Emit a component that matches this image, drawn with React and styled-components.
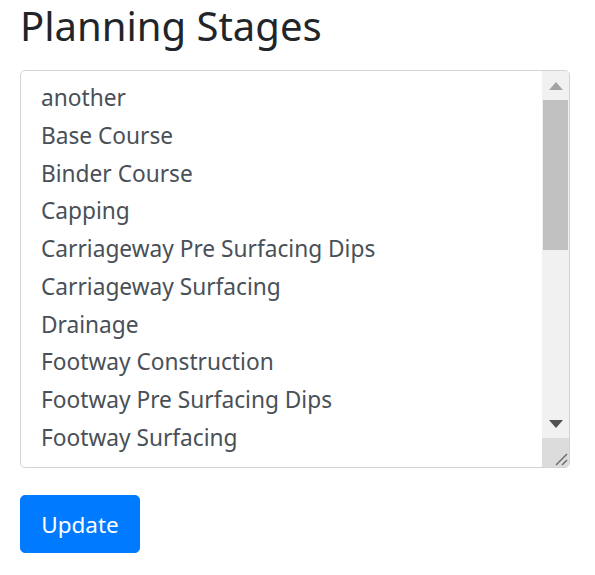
import React from 'react';
import styled, { createGlobalStyle } from 'styled-components';

const stages = [
  'another',
  'Base Course',
  'Binder Course',
  'Capping',
  'Carriageway Pre Surfacing Dips',
  'Carriageway Surfacing',
  'Drainage',
  'Footway Construction',
  'Footway Pre Surfacing Dips',
  'Footway Surfacing',
];

const GlobalStyle = createGlobalStyle`
  body {
    margin: 0;
    background: #fff;
    font-family: 'Noto Sans', 'Open Sans', sans-serif;
  }
`;

const Page = styled.div`
  padding: 0 20px;
`;

const Title = styled.h1`
  margin: 0 0 18px;
  font-size: 40px;
  font-weight: 400;
  line-height: 52px;
  color: #212529;
`;

const ListBox = styled.div`
  display: flex;
  width: 550px;
  height: 398px;
  box-sizing: border-box;
  border: 1px solid #ced4da;
  border-radius: 5px;
  overflow: hidden;
  background: #fff;
`;

const Options = styled.div`
  flex: 1;
  overflow: hidden;
  padding: 8px 0 0 20px;
`;

const Option = styled.div`
  height: 37.75px;
  line-height: 37.75px;
  font-size: 22.7px;
  color: #495057;
  white-space: nowrap;
`;

const ScrollBar = styled.div`
  width: 27px;
  display: flex;
  flex-direction: column;
  background: #f1f1f1;
`;

const ArrowButton = styled.div`
  height: 29px;
  display: flex;
  align-items: center;
  justify-content: center;
`;

const Track = styled.div`
  flex: 1;
  padding: 0 1px;
`;

const Thumb = styled.div`
  height: 150px;
  background: #c1c1c1;
`;

const Corner = styled.div`
  height: 29px;
  background: #dcdcdc;
  display: flex;
  align-items: flex-end;
  justify-content: flex-end;
`;

const Button = styled.button`
  margin-top: 27px;
  width: 120px;
  height: 58px;
  border: 1px solid #007bff;
  border-radius: 5px;
  background: #007bff;
  color: #fff;
  font-family: inherit;
  font-size: 22.5px;
  cursor: pointer;
`;

const Arrow = ({ up, color }) => (
  <svg width="14" height="8" viewBox="0 0 14 8">
    <polygon points={up ? '0,8 7,0 14,8' : '0,0 14,0 7,8'} fill={color} />
  </svg>
);

export default function App() {
  return (
    <>
      <GlobalStyle />
      <Page>
        <Title>Planning Stages</Title>
        <ListBox role="listbox" aria-multiselectable="true">
          <Options>
            {stages.map((s) => (
              <Option key={s} role="option">{s}</Option>
            ))}
          </Options>
          <ScrollBar>
            <ArrowButton>
              <Arrow up color="#a3a3a3" />
            </ArrowButton>
            <Track>
              <Thumb />
            </Track>
            <ArrowButton>
              <Arrow color="#505050" />
            </ArrowButton>
            <Corner>
              <svg width="16" height="16" viewBox="0 0 16 16">
                <line x1="3" y1="14" x2="14" y2="3" stroke="#6b6b6b" strokeWidth="1.4" />
                <line x1="9" y1="14" x2="14" y2="9" stroke="#6b6b6b" strokeWidth="1.4" />
              </svg>
            </Corner>
          </ScrollBar>
        </ListBox>
        <Button>Update</Button>
      </Page>
    </>
  );
}
